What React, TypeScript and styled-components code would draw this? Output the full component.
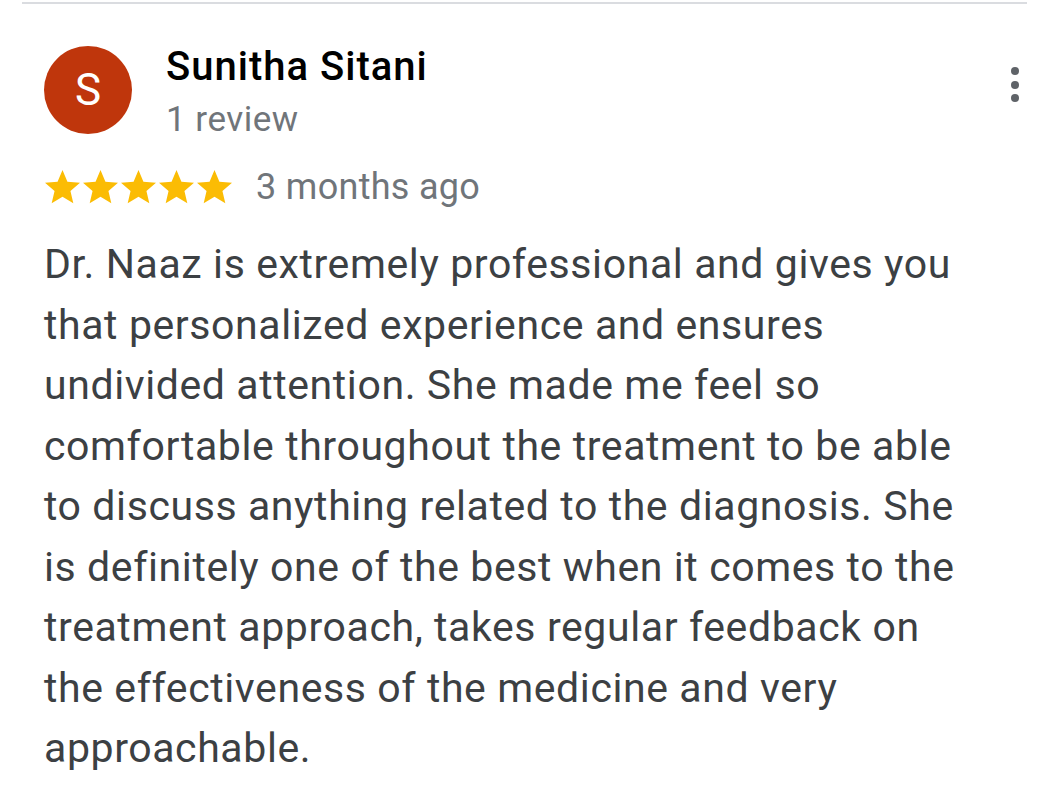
import React from "react";
import styled, { createGlobalStyle } from "styled-components";

const Global = createGlobalStyle`
  html, body { margin: 0; padding: 0; background: #ffffff; }
  body { font-family: Roboto, "Liberation Sans", Arial, sans-serif; }
`;

const Page = styled.div`
  width: 1055px;
  height: 801px;
  background: #ffffff;
  overflow: hidden;
  padding-top: 2px;
  box-sizing: border-box;
`;

const Divider = styled.div`
  height: 2px;
  margin: 0 28px 0 22px;
  background: #dadce0;
`;

const Card = styled.div`
  padding: 0 0 0 44px;
`;

const Header = styled.div`
  display: flex;
  align-items: flex-start;
  margin-top: 42px;
`;

const Avatar = styled.div`
  width: 88px;
  height: 88px;
  border-radius: 50%;
  background: #bf360c;
  color: #ffffff;
  display: flex;
  align-items: center;
  justify-content: center;
  font-size: 44px;
  font-weight: 400;
  flex: none;
`;

const NameBlock = styled.div`
  display: flex;
  flex-direction: column;
  margin-left: 34px;
  flex: 1;
`;

const Name = styled.div`
  font-size: 40px;
  font-weight: 500;
  letter-spacing: 1px;
  color: #000000;
  line-height: 44px;
  margin-top: -1px;
`;

const Meta = styled.div`
  font-size: 35px;
  letter-spacing: 0.5px;
  color: #70757a;
  line-height: 40px;
  margin-top: 11px;
`;

const MoreButton = styled.div`
  display: flex;
  flex-direction: column;
  align-items: center;
  gap: 5.5px;
  width: 12px;
  margin: 21px 34px 0 0;
`;

const Dot = styled.span`
  width: 8px;
  height: 8px;
  border-radius: 50%;
  background: #5f6368;
`;

const RatingRow = styled.div`
  display: flex;
  align-items: center;
  margin-top: 27px;
`;

const Stars = styled.div`
  display: flex;
  gap: 3px;
  margin-left: 1px;
`;

const Time = styled.span`
  font-size: 36px;
  letter-spacing: 0.3px;
  color: #70757a;
  margin-left: 24px;
  line-height: 40px;
`;

const Body = styled.p`
  margin: 27px 0 0 0;
  width: 925px;
  font-size: 41px;
  letter-spacing: 0.6px;
  line-height: 60.5px;
  color: #3c4043;
`;

const Star = () => (
  <svg width="35" height="34" viewBox="2 2 20 19.3" aria-hidden="true">
    <path
      fill="#fbbc04"
      d="M12 17.27L18.18 21l-1.64-7.03L22 9.24l-7.19-.61L12 2 9.19 8.63 2 9.24l5.46 4.73L5.82 21z"
    />
  </svg>
);

export default function App() {
  return (
    <Page>
      <Global />
      <Divider />
      <Card>
        <Header>
          <Avatar>S</Avatar>
          <NameBlock>
            <Name>Sunitha Sitani</Name>
            <Meta>1 review</Meta>
          </NameBlock>
          <MoreButton>
            <Dot />
            <Dot />
            <Dot />
          </MoreButton>
        </Header>
        <RatingRow>
          <Stars>
            {[0, 1, 2, 3, 4].map((i) => (
              <Star key={i} />
            ))}
          </Stars>
          <Time>3 months ago</Time>
        </RatingRow>
        <Body>
          Dr. Naaz is extremely professional and gives you that personalized
          experience and ensures undivided attention. She made me feel so
          comfortable throughout the treatment to be able to discuss anything
          related to the diagnosis. She is definitely one of the best when it
          comes to the treatment approach, takes regular feedback on the
          effectiveness of the medicine and very approachable.
        </Body>
      </Card>
    </Page>
  );
}
